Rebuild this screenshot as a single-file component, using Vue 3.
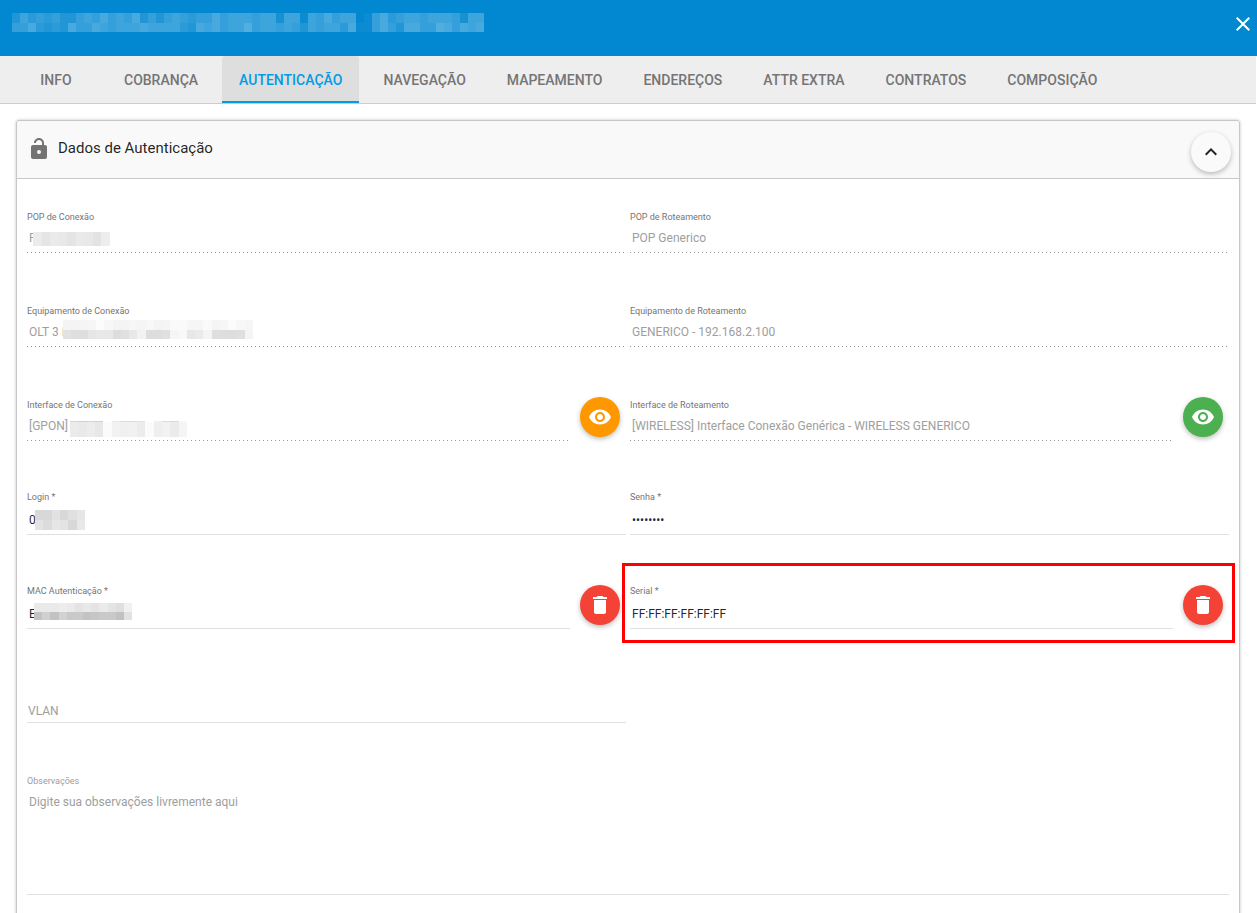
<script setup>
import { ref } from 'vue'

const tabs = ['INFO', 'COBRANÇA', 'AUTENTICAÇÃO', 'NAVEGAÇÃO', 'MAPEAMENTO', 'ENDEREÇOS', 'ATTR EXTRA', 'CONTRATOS', 'COMPOSIÇÃO']
const active = ref('AUTENTICAÇÃO')

const icons = {
  eye: 'M12 4.5C7 4.5 2.73 7.61 1 12c1.73 4.39 6 7.5 11 7.5s9.27-3.11 11-7.5c-1.73-4.39-6-7.5-11-7.5zM12 17c-2.76 0-5-2.24-5-5s2.24-5 5-5 5 2.24 5 5-2.24 5-5 5zm0-8c-1.66 0-3 1.34-3 3s1.34 3 3 3 3-1.34 3-3-1.34-3-3-3z',
  trash: 'M6 19c0 1.1.9 2 2 2h8c1.1 0 2-.9 2-2V7H6v12zM19 4h-3.500l-1-1h-5l-1 1H5v2h14V4z'
}

// Each redaction mosaic is a list of rows; a row has a height and one grey level per cell.
const fields = ref([
  { id: 'pop-con', label: 'POP de Conexão', value: 'F', disabled: true,
    mask: { left: 6, top: 8, width: 77, rows: [[14, 'ebe5eae8e4eae8e3ed']] } },
  { id: 'pop-rot', label: 'POP de Roteamento', value: 'POP Generico', disabled: true },
  { id: 'eq-con', label: 'Equipamento de Conexão', value: 'OLT 3 I', disabled: true,
    mask: { left: 36, top: 2, width: 190, rows: [
      [10, 'f4f4f5f6fcf7f4f4f6f5f8f4f5fafaf6f6faf4f6fcf8f6'],
      [9, 'e2dedee6e8e8dde0e8f2dddde0f5f8e7eaf4dedddddff4']] } },
  { id: 'eq-rot', label: 'Equipamento de Roteamento', value: 'GENERICO - 192.168.2.100', disabled: true },
  { id: 'if-con', label: 'Interface de Conexão', value: '[GPON]', disabled: true,
    mask: { left: 43, top: 9, width: 117, rows: [
      [1, 'd6d0d4d0ffe8dcdae4fff0dcdaf8'],
      [15, 'ebe9ece7fbf2f0f1ecfbeff2ebf5']] },
    action: { icon: 'eye', color: 'orange', label: 'Ver interface de conexão' } },
  { id: 'if-rot', label: 'Interface de Roteamento', value: '[WIRELESS] Interface Conexão Genérica - WIRELESS GENERICO', disabled: true,
    action: { icon: 'eye', color: 'green', label: 'Ver interface de roteamento' } },
  { id: 'login', label: 'Login *', value: '0',
    mask: { left: 8, top: 4, width: 50, rows: [[10, 'd8d8e2d8e0e6'], [10, 'e3dce6e3d8e8']] } },
  { id: 'senha', label: 'Senha *', value: '12345678', type: 'password' },
  { id: 'mac', label: 'MAC Autenticação *', value: 'E',
    mask: { left: 7, top: 3, width: 98, rows: [
      [9, 'eaeaeaedeae4e9e4eae4dff1'],
      [8, 'c3d0c2d2c9cac3c6c9c9c2e2']] },
    action: { icon: 'trash', color: 'red', label: 'Remover MAC' } },
  { id: 'serial', label: 'Serial *', value: 'FF:FF:FF:FF:FF:FF', highlight: true,
    action: { icon: 'trash', color: 'red', label: 'Remover serial' } }
])
const vlan = ref('')
const notes = ref('')

function cells(mask) {
  const out = []
  let y = 0
  for (const [h, levels] of mask.rows) {
    const n = levels.length / 2
    for (let i = 0; i < n; i++) {
      const x = Math.round((i * mask.width) / n)
      const end = Math.round(((i + 1) * mask.width) / n)
      const g = levels.slice(i * 2, i * 2 + 2)
      out.push({ x, y, w: end - x, h, fill: '#' + g + g + g })
    }
    y += h
  }
  return out
}
const maskHeight = (mask) => mask.rows.reduce((sum, row) => sum + row[0], 0)

const titleRows = [
  { y: 0, h: 10, levels: '36454533565756573535654557566656626616575660157456656665266' },
  { y: 10, h: 9, levels: '55743437557656667666643767566856656536566471157537755875767' }
]
const open = ref(true)
</script>

<template>
  <div class="dialog">
    <header class="toolbar">
      <svg class="title" width="472" height="19" viewBox="0 0 472 19" shape-rendering="crispEdges" aria-hidden="true">
        <g v-for="row in titleRows" :key="row.y">
          <rect v-for="(d, i) in row.levels" :key="i" :x="i * 8" :y="row.y" width="8" :height="row.h" fill="#fff" :fill-opacity="d * 0.04" />
        </g>
      </svg>
      <button class="close" type="button" aria-label="Fechar">
        <svg width="24" height="24" viewBox="0 0 24 24"><path d="M19 6.410L17.590 5 12 10.590 6.410 5 5 6.410 10.590 12 5 17.590 6.410 19 12 13.410 17.590 19 19 17.590 13.410 12z" /></svg>
      </button>
    </header>

    <nav class="tabs" role="tablist">
      <button v-for="tab in tabs" :key="tab" class="tab" :class="{ active: tab === active }" type="button" role="tab" :aria-selected="tab === active" @click="active = tab">{{ tab }}</button>
    </nav>

    <main class="content">
      <section class="panel">
        <div class="panel-head">
          <svg class="lock" width="24" height="24" viewBox="0 0 24 24"><path d="M18 8h-1V6c0-2.760-2.240-5-5-5S7 3.240 7 6h1.900c0-1.710 1.390-3.100 3.100-3.100 1.710 0 3.100 1.390 3.100 3.100v2H6c-1.100 0-2 .9-2 2v10c0 1.100.9 2 2 2h12c1.100 0 2-.9 2-2V10c0-1.100-.9-2-2-2z" /><circle cx="12" cy="15" r="2" fill="#f9f9f9" /></svg>
          <h2>Dados de Autenticação</h2>
          <button class="round collapse" type="button" aria-label="Recolher" @click="open = !open">
            <svg width="24" height="24" viewBox="0 0 24 24"><path d="M12 8l-6 6 1.410 1.410L12 10.830l4.590 4.580L18 14z" /></svg>
          </button>
        </div>

        <form v-show="open" class="grid" @submit.prevent>
          <div v-for="f in fields" :key="f.id" class="cell" :class="{ highlight: f.highlight }">
            <div class="field" :class="{ disabled: f.disabled }">
              <label :for="f.id">{{ f.label }}</label>
              <div class="control">
                <input :id="f.id" v-model="f.value" :type="f.type || 'text'" :disabled="f.disabled" autocomplete="off">
                <svg v-if="f.mask" class="mask" :width="f.mask.width" :height="maskHeight(f.mask)" :style="{ left: f.mask.left + 'px', top: f.mask.top + 'px' }" shape-rendering="crispEdges" aria-hidden="true">
                  <rect v-for="(c, i) in cells(f.mask)" :key="i" :x="c.x" :y="c.y" :width="c.w" :height="c.h" :fill="c.fill" />
                </svg>
              </div>
            </div>
            <button v-if="f.action" class="round" :class="f.action.color" type="button" :aria-label="f.action.label">
              <svg width="24" height="24" viewBox="0 0 24 24"><path :d="icons[f.action.icon]" /></svg>
            </button>
          </div>

          <div class="cell">
            <div class="field">
              <input id="vlan" v-model="vlan" class="vlan" type="text" placeholder="VLAN" aria-label="VLAN">
            </div>
          </div>

          <div class="field notes">
            <label for="notes">Observações</label>
            <textarea id="notes" v-model="notes" placeholder="Digite sua observações livremente aqui"></textarea>
          </div>
        </form>
      </section>
    </main>
  </div>
</template>

<style>
body {
  background: #fff;
}
</style>

<style scoped>
.dialog {
  height: 100vh;
  overflow: hidden;
  display: flex;
  flex-direction: column;
  background: #fff;
  color: rgba(0, 0, 0, 0.87);
  font-family: Roboto, "Liberation Sans", sans-serif;
}
.dialog *,
.dialog *::after {
  box-sizing: border-box;
}
button {
  border: 0;
  padding: 0;
  background: none;
  font: inherit;
  cursor: pointer;
}
svg {
  display: block;
}
.toolbar {
  flex: none;
  height: 56px;
  padding: 12px 2px 0 12px;
  display: flex;
  justify-content: space-between;
  align-items: flex-start;
  background: #0288d1;
}
.title {
  margin-top: 1px;
}
.close svg {
  fill: #fff;
}
.tabs {
  flex: none;
  height: 48px;
  margin-right: 1px;
  padding-left: 12px;
  display: flex;
  gap: 7px;
  background: #eee;
  border-bottom: 1px solid #ccc;
}
.tab {
  min-width: 88px;
  padding: 0 17px;
  border-bottom: 2px solid transparent;
  border-top: 2px solid transparent;
  color: #757575;
  font-size: 14px;
  font-weight: 500;
  white-space: nowrap;
}
.tab.active {
  border-top-color: #dedede;
  border-bottom-color: #039be5;
  border-radius: 3px 3px 0 0;
  background: #dedede;
  color: #039be5;
}
.content {
  flex: 1;
  min-height: 0;
  overflow: hidden;
  padding: 16px 17px 0 16px;
}
.panel {
  border: 1px solid #c8c8c8;
  border-radius: 3px;
  box-shadow: 0 0 3px rgba(0, 0, 0, 0.25);
}
.panel-head {
  height: 58px;
  padding: 0 8px 0 10px;
  display: flex;
  align-items: flex-start;
  background: #f9f9f9;
  border-bottom: 1px solid #c8c8c8;
  border-radius: 3px 3px 0 0;
}
.lock {
  margin-top: 16px;
  fill: #737373;
}
h2 {
  flex: 1;
  margin: 17px 0 0 7px;
  font-size: 15px;
  font-weight: 400;
  line-height: 20px;
}
.round {
  flex: none;
  width: 40px;
  height: 40px;
  border-radius: 50%;
  display: grid;
  place-items: center;
  box-shadow: 0 2px 5px rgba(0, 0, 0, 0.26);
}
.round svg {
  fill: #fff;
}
.collapse {
  margin-top: 11px;
  background: #fafafa;
}
.collapse svg {
  fill: #212121;
}
.orange {
  background: #ff9800;
}
.green {
  background: #4caf50;
}
.red {
  background: #f44336;
}
.grid {
  display: grid;
  grid-template-columns: 1fr 1fr;
  gap: 46px 4px;
  padding: 26px 10px 40px;
}
.cell {
  position: relative;
  min-width: 0;
  height: 48px;
  display: flex;
  align-items: flex-end;
  gap: 10px;
}
.cell .round {
  margin: 0 6px 4px 0;
}
.highlight::after {
  content: "";
  position: absolute;
  inset: -18px -6px -14px -8px;
  border: 3px solid #f00;
  pointer-events: none;
}
.field {
  flex: 1;
  min-width: 0;
  display: flex;
  flex-direction: column;
}
label {
  margin-bottom: 3px;
  color: #757575;
  font-size: 9px;
  line-height: 12px;
}
.disabled label {
  margin-bottom: 1px;
}
.control {
  position: relative;
  display: flex;
}
input,
textarea {
  width: 100%;
  margin: 0;
  padding: 0 2px;
  border: 0;
  border-bottom: 1px solid #e0e0e0;
  border-radius: 0;
  outline: 0;
  background: none;
  color: rgba(0, 0, 0, 0.87);
  font: 400 12px Roboto, "Liberation Sans", sans-serif;
}
input {
  height: 29px;
}
input:disabled {
  border-bottom-color: transparent;
  background: repeating-linear-gradient(90deg, #999 0 1px, transparent 1px 4px) left 28px / 100% 1px no-repeat border-box;
  color: #9e9e9e;
}
.mask {
  position: absolute;
}
input.vlan {
  height: 23px;
  padding: 0 1px;
}
::placeholder {
  color: #9e9e9e;
  opacity: 1;
}
.notes {
  grid-column: 1 / -1;
  padding-top: 6px;
}
.notes label {
  margin-bottom: 1px;
  color: #9e9e9e;
}
textarea {
  display: block;
  height: 107px;
  padding-top: 4px;
  line-height: 20px;
  resize: none;
}
</style>
